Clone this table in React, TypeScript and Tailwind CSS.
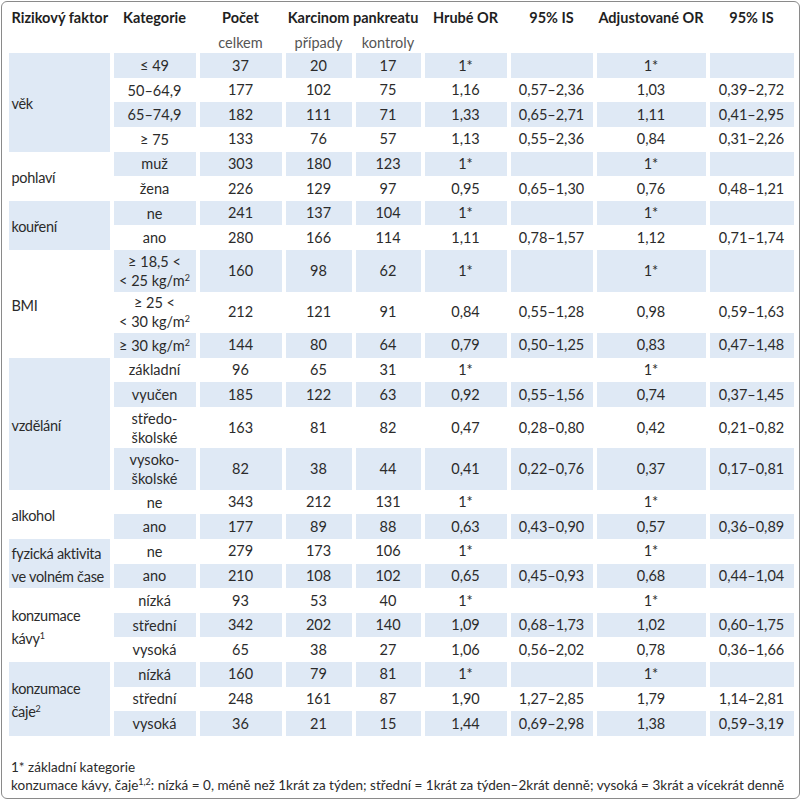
import type { ReactNode } from "react";

type Row = { c: ReactNode; v: string[]; tall?: boolean };
type Group = { label: ReactNode; rows: Row[] };

const Sup = ({ children }: { children: ReactNode }) => (
  <sup className="top-[-0.55em] text-[9px]">{children}</sup>
);

const kg = (pre: string) => (
  <>
    {pre} kg/m<Sup>2</Sup>
  </>
);

const GROUPS: Group[] = [
  {
    label: "věk",
    rows: [
      { c: "≤ 49", v: ["37", "20", "17", "1*", "", "1*", ""] },
      { c: "50–64,9", v: ["177", "102", "75", "1,16", "0,57–2,36", "1,03", "0,39–2,72"] },
      { c: "65–74,9", v: ["182", "111", "71", "1,33", "0,65–2,71", "1,11", "0,41–2,95"] },
      { c: "≥ 75", v: ["133", "76", "57", "1,13", "0,55–2,36", "0,84", "0,31–2,26"] },
    ],
  },
  {
    label: "pohlaví",
    rows: [
      { c: "muž", v: ["303", "180", "123", "1*", "", "1*", ""] },
      { c: "žena", v: ["226", "129", "97", "0,95", "0,65–1,30", "0,76", "0,48–1,21"] },
    ],
  },
  {
    label: "kouření",
    rows: [
      { c: "ne", v: ["241", "137", "104", "1*", "", "1*", ""] },
      { c: "ano", v: ["280", "166", "114", "1,11", "0,78–1,57", "1,12", "0,71–1,74"] },
    ],
  },
  {
    label: "BMI",
    rows: [
      {
        c: (
          <>
            ≥ 18,5 &lt;
            <br />
            {kg("< 25")}
          </>
        ),
        v: ["160", "98", "62", "1*", "", "1*", ""],
        tall: true,
      },
      {
        c: (
          <>
            ≥ 25 &lt;
            <br />
            {kg("< 30")}
          </>
        ),
        v: ["212", "121", "91", "0,84", "0,55–1,28", "0,98", "0,59–1,63"],
        tall: true,
      },
      { c: kg("≥ 30"), v: ["144", "80", "64", "0,79", "0,50–1,25", "0,83", "0,47–1,48"] },
    ],
  },
  {
    label: "vzdělání",
    rows: [
      { c: "základní", v: ["96", "65", "31", "1*", "", "1*", ""] },
      { c: "vyučen", v: ["185", "122", "63", "0,92", "0,55–1,56", "0,74", "0,37–1,45"] },
      {
        c: (
          <>
            středo-
            <br />
            školské
          </>
        ),
        v: ["163", "81", "82", "0,47", "0,28–0,80", "0,42", "0,21–0,82"],
        tall: true,
      },
      {
        c: (
          <>
            vysoko-
            <br />
            školské
          </>
        ),
        v: ["82", "38", "44", "0,41", "0,22–0,76", "0,37", "0,17–0,81"],
        tall: true,
      },
    ],
  },
  {
    label: "alkohol",
    rows: [
      { c: "ne", v: ["343", "212", "131", "1*", "", "1*", ""] },
      { c: "ano", v: ["177", "89", "88", "0,63", "0,43–0,90", "0,57", "0,36–0,89"] },
    ],
  },
  {
    label: (
      <>
        fyzická aktivita
        <br />
        ve volném čase
      </>
    ),
    rows: [
      { c: "ne", v: ["279", "173", "106", "1*", "", "1*", ""] },
      { c: "ano", v: ["210", "108", "102", "0,65", "0,45–0,93", "0,68", "0,44–1,04"] },
    ],
  },
  {
    label: (
      <>
        konzumace
        <br />
        kávy<Sup>1</Sup>
      </>
    ),
    rows: [
      { c: "nízká", v: ["93", "53", "40", "1*", "", "1*", ""] },
      { c: "střední", v: ["342", "202", "140", "1,09", "0,68–1,73", "1,02", "0,60–1,75"] },
      { c: "vysoká", v: ["65", "38", "27", "1,06", "0,56–2,02", "0,78", "0,36–1,66"] },
    ],
  },
  {
    label: (
      <>
        konzumace
        <br />
        čaje<Sup>2</Sup>
      </>
    ),
    rows: [
      { c: "nízká", v: ["160", "79", "81", "1*", "", "1*", ""] },
      { c: "střední", v: ["248", "161", "87", "1,90", "1,27–2,85", "1,79", "1,14–2,81"] },
      { c: "vysoká", v: ["36", "21", "15", "1,44", "0,69–2,98", "1,38", "0,59–3,19"] },
    ],
  },
];

const COLS = ["w-[101px]", "w-[82px]", "w-[82px]", "w-[66px]", "w-[65px]", "w-[82px]", "w-[82px]", "w-[109px]", "w-[84px]"];

export default function App() {
  let idx = 0;
  const body = GROUPS.flatMap((g, gi) =>
    g.rows.map((r, ri) => {
      const blue = idx++ % 2 === 0;
      const cell = `text-center align-middle ${blue ? "bg-[#dfe9f5]" : ""}`;
      return (
        <tr key={`${gi}-${ri}`} className={r.tall ? "h-[41.5px]" : "h-[24.6px]"}>
          {ri === 0 && (
            <td
              rowSpan={g.rows.length}
              className={`pl-[3px] pt-[3px] text-left align-middle leading-[23px] tracking-[-0.3px] ${gi % 2 === 0 ? "bg-[#dfe9f5]" : ""}`}
            >
              {g.label}
            </td>
          )}
          <td className={`${cell} leading-[19px]`}>{r.c}</td>
          {r.v.map((x, i) => (
            <td key={i} className={cell}>
              {x}
            </td>
          ))}
        </tr>
      );
    })
  );

  return (
    <div className="ml-px mt-px h-[798px] w-[799px] rounded-[6px] border-[1.5px] border-[#8a8a8a] bg-white pl-[2.5px] pt-[3.5px] font-['Lato','Open_Sans',sans-serif] text-[14.5px] text-[#2b2b2b]">
      <table className="table-fixed border-separate border-spacing-x-1 border-spacing-y-0">
        <colgroup>
          {COLS.map((c, i) => (
            <col key={i} className={c} />
          ))}
        </colgroup>
        <thead>
          <tr className="h-6 text-[#1f1f1f]">
            <th className="pl-[3px] text-left font-bold">Rizikový faktor</th>
            <th className="font-bold">Kategorie</th>
            <th className="font-bold">Počet</th>
            <th colSpan={2} className="font-bold">
              Karcinom pankreatu
            </th>
            <th className="font-bold">Hrubé OR</th>
            <th className="font-bold">95% IS</th>
            <th className="font-bold">Adjustované OR</th>
            <th className="font-bold">95% IS</th>
          </tr>
          <tr className="h-[23px] text-[#555]">
            <th />
            <th />
            <th className="pt-[2px] font-normal">celkem</th>
            <th className="pt-[2px] font-normal">případy</th>
            <th className="pt-[2px] font-normal">kontroly</th>
            <th />
            <th />
            <th />
            <th />
          </tr>
        </thead>
        <tbody>{body}</tbody>
      </table>
      <div className="mt-[22px] whitespace-nowrap pl-[6.5px] text-[13.5px] leading-[18px] tracking-[0.02px]">
        <p>1* základní kategorie</p>
        <p>
          konzumace kávy, čaje<Sup>1,2</Sup>: nízká = 0, méně než 1krát za týden; střední = 1krát za týden–2krát denně; vysoká = 3krát a vícekrát denně
        </p>
      </div>
    </div>
  );
}
